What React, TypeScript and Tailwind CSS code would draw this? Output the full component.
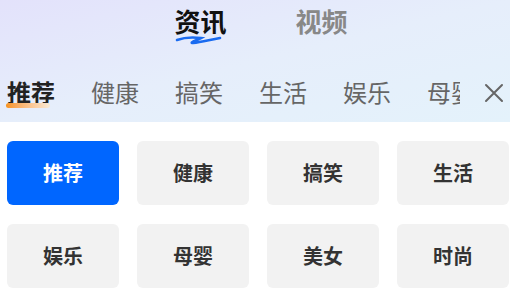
const subTabs = ['推荐', '健康', '搞笑', '生活', '娱乐', '母婴']
const grid = ['推荐', '健康', '搞笑', '生活', '娱乐', '母婴', '美女', '时尚']

export default function App() {
  return (
    <div className="w-[510px] h-[302px] bg-white overflow-hidden font-['Noto_Sans_CJK_SC','Noto_Sans',sans-serif]">
      {/* header */}
      <div className="h-[122px] bg-gradient-to-br from-[#e3e2fb] via-[#e6eefb] to-[#e4f2fb]">
        <div className="flex justify-center gap-[69px] pt-[4px] pl-[12px]">
          <div className="relative">
            <span className="text-[26px] leading-[34px] font-bold text-[#111]">资讯</span>
            <svg className="absolute left-[1px] top-[30px]" width="48" height="12" viewBox="0 0 48 12">
              <path
                d="M2 6 C10 3 18 3 26 4 C20 7 14 9 18 9 C26 8 34 6 45 4"
                fill="none"
                stroke="#1a6bf0"
                strokeWidth="2.6"
                strokeLinecap="round"
              />
            </svg>
          </div>
          <span className="text-[26px] leading-[34px] font-bold text-[#888]">视频</span>
        </div>

        <div className="flex items-start mt-[38px] pl-[7px]">
          <div className="flex gap-[36px] whitespace-nowrap">
            {subTabs.map((t, i) => (
              <div
                key={t}
                className={i === subTabs.length - 1 ? 'relative shrink-0 h-[40px] w-[33px] overflow-hidden' : 'relative shrink-0 h-[40px]'}
              >
                <span
                  className={
                    i === 0
                      ? 'text-[24px] leading-[32px] font-bold text-[#222]'
                      : 'text-[24px] leading-[32px] text-[#666]'
                  }
                >
                  {t}
                </span>
                {i === 0 && (
                  <div className="absolute left-[-1px] top-[27px] h-[5px] w-[44px] rounded-full bg-gradient-to-r from-[#f7931a] to-[#f8ead6]" />
                )}
              </div>
            ))}
          </div>
          <svg className="ml-auto mr-[6px] mt-[7px]" width="20" height="20" viewBox="0 0 20 20">
            <path d="M2 2 L18 18 M18 2 L2 18" stroke="#666" strokeWidth="2" strokeLinecap="round" />
          </svg>
        </div>
      </div>

      {/* grid */}
      <div className="grid grid-cols-[repeat(4,112px)] gap-x-[18px] gap-y-[19px] pl-[7px] pt-[19px]">
        {grid.map((g, i) => (
          <div
            key={g}
            className={
              i === 0
                ? 'h-[64px] rounded-[6px] bg-[#0066ff] text-white flex items-center justify-center text-[20px] font-bold'
                : 'h-[64px] rounded-[6px] bg-[#f2f2f2] text-[#333] flex items-center justify-center text-[20px] font-bold'
            }
          >
            {g}
          </div>
        ))}
      </div>
    </div>
  )
}
